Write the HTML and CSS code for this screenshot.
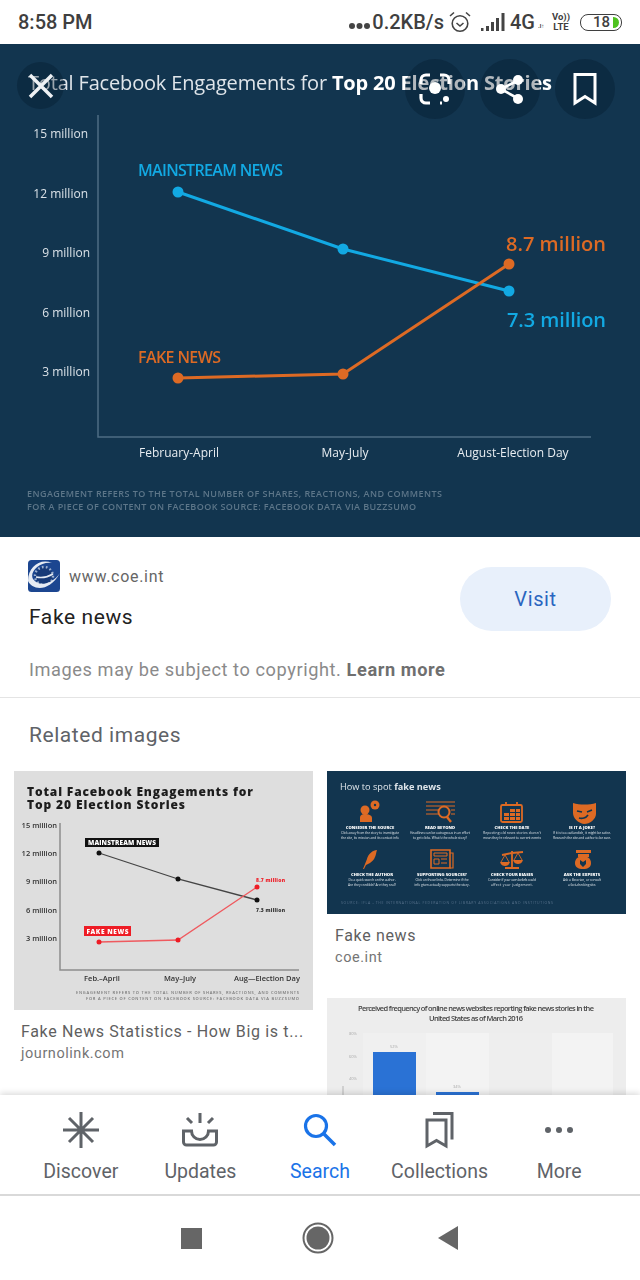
FILE: index.html
```html
<!DOCTYPE html>
<html lang="en">
<head>
<meta charset="utf-8">
<title>Fake news</title>
<link rel="stylesheet" href="styles.css">
</head>
<body>
<div class="phone">
  <header class="status">
    <span class="time">8:58 PM</span>
    <div class="status-right">
      <svg class="dots" width="21" height="8" viewBox="0 0 21 8"><g fill="#444"><circle cx="3" cy="4" r="3"/><circle cx="10.500" cy="4" r="3"/><circle cx="18" cy="4" r="3"/></g></svg>
      <span class="speed">0.2KB/s</span>
      <svg class="alarm" width="22" height="22" viewBox="0 0 22 22"><circle cx="11" cy="12.500" r="7.800" fill="none" stroke="#444" stroke-width="1.600"/><path d="M7.500 12l3.500 3 3.500-3M1 5l4-3.500M21 5l-4-3.500" fill="none" stroke="#444" stroke-width="1.600"/></svg>
      <svg class="signal" width="24" height="18" viewBox="0 0 24 18"><path d="M0 15h2.500v3H0zM5 13h3v5H5zM10 9h3v9h-3zM15 5h3v13h-3zM20.500 0h3v18h-3z" fill="#444"/></svg>
      <span class="net">4G</span>
      <span class="arrows">.l↑</span>
      <span class="volte"><span>Vo))</span><span>LTE</span></span>
      <div class="battery"><span class="batt-num">18</span><i class="batt-fill"></i></div>
    </div>
  </header>

  <section class="hero">
    <svg class="hero-chart" viewBox="0 44 640 493" width="640" height="493">
      <text class="h-title" x="28" y="90" textLength="524">Total Facebook Engagements for <tspan class="h-bold">Top 20 Election Stories</tspan></text>
      <path d="M98 115V437H591" fill="none" stroke="#4d6c84" stroke-width="1.500"/>
      <g class="h-y">
        <text x="88" y="138">15 million</text>
        <text x="88" y="198">12 million</text>
        <text x="90" y="257">9 million</text>
        <text x="90" y="317">6 million</text>
        <text x="90" y="376">3 million</text>
      </g>
      <g class="h-x">
        <text x="179" y="457">February-April</text>
        <text x="345" y="457">May-July</text>
        <text x="513" y="457">August-Election Day</text>
      </g>
      <text class="h-lbl blue" x="138" y="176" textLength="145">MAINSTREAM NEWS</text>
      <text class="h-lbl orange" x="138" y="363" textLength="83">FAKE NEWS</text>
      <path d="M178 192L343 249 509 291" fill="none" stroke="#12a9e3" stroke-width="3"/>
      <path d="M178 378L343 374 509 264" fill="none" stroke="#dd6a24" stroke-width="3"/>
      <g fill="#12a9e3"><circle cx="178" cy="192" r="5.500"/><circle cx="343" cy="249" r="5.500"/><circle cx="509" cy="291" r="5.500"/></g>
      <g fill="#dd6a24"><circle cx="178" cy="378" r="5.500"/><circle cx="343" cy="374" r="5.500"/><circle cx="509" cy="264" r="5.500"/></g>
      <text class="h-val orange" x="506" y="251" textLength="100">8.7 million</text>
      <text class="h-val blue" x="507" y="327" textLength="99">7.3 million</text>
      <g class="h-note">
        <text x="27" y="497" textLength="415">ENGAGEMENT REFERS TO THE TOTAL NUMBER OF SHARES, REACTIONS, AND COMMENTS</text>
        <text x="27" y="510" textLength="389">FOR A PIECE OF CONTENT ON FACEBOOK SOURCE: FACEBOOK DATA VIA BUZZSUMO</text>
      </g>
    </svg>
    <button class="round round-close" aria-label="Close">
      <svg width="30" height="30" viewBox="0 0 30 30"><path d="M4 4l22 22M26 4L4 26" stroke="#eef1f4" stroke-width="3.500" fill="none"/></svg>
    </button>
    <button class="round round-lens" aria-label="Lens">
      <svg width="36" height="36" viewBox="0 0 36 36"><path d="M4 13V9a5 5 0 0 1 5-5h4M23 4h4a5 5 0 0 1 5 5v4M4 23v4a5 5 0 0 0 5 5h4M23 32h2" fill="none" stroke="#fff" stroke-width="3.200"/><circle cx="18" cy="17" r="6" fill="#fff"/><circle cx="29" cy="28" r="3" fill="#fff"/></svg>
    </button>
    <button class="round round-share" aria-label="Share">
      <svg width="36" height="36" viewBox="0 0 36 36"><path d="M27 9L9 18l18 10" fill="none" stroke="#fff" stroke-width="2.600"/><circle cx="26" cy="9" r="5" fill="#fff"/><circle cx="9" cy="18" r="5" fill="#fff"/><circle cx="26" cy="28" r="5" fill="#fff"/></svg>
    </button>
    <button class="round round-save" aria-label="Save">
      <svg width="30" height="36" viewBox="0 0 30 36"><path d="M5 3.500h20V32l-10-6.500L5 32z" fill="none" stroke="#fff" stroke-width="3"/></svg>
    </button>
  </section>

  <main class="content">
    <section class="source">
      <div class="source-text">
        <div class="site">
          <svg class="site-logo" width="32" height="32" viewBox="0 0 32 32"><rect width="32" height="32" rx="3.500" fill="#1c4690"/><circle cx="16" cy="16" r="9" fill="#173a78" stroke="#9db0ce" stroke-width="2.400" stroke-dasharray="1.700 2.300"/><path d="M0 21c4 9 21 12 32-8-8 12-22 14-27 6C1 12 12 1 24 3 12-2 0 7 0 21z" fill="#e6ebf3"/><path d="M8 17c5 1 12 0 17-3" stroke="#e6ebf3" stroke-width="1.600" fill="none"/></svg>
          <span class="site-url">www.coe.int</span>
        </div>
        <div class="source-name">Fake news</div>
      </div>
      <a class="visit">Visit</a>
    </section>
    <p class="copyright">Images may be subject to copyright. <b>Learn more</b></p>
    <h2 class="related">Related images</h2>
    <div class="gallery">
      <div class="col">
        <article class="card">
          <svg class="thumb" viewBox="0 0 299 239" width="299" height="239">
            <rect width="299" height="239" fill="#dedede"/>
            <g class="t-title"><text x="13" y="25" textLength="226">Total Facebook Engagements for</text><text x="13" y="38" textLength="158">Top 20 Election Stories</text></g>
            <path d="M46 52V199H285" fill="none" stroke="#8d8d8d" stroke-width="1.500"/>
            <g class="t-y"><text x="43" y="57">15 million</text><text x="43" y="85">12 million</text><text x="43" y="113">9 million</text><text x="43" y="142">6 million</text><text x="43" y="170">3 million</text></g>
            <rect x="71" y="67" width="74" height="9" fill="#111"/>
            <text class="t-tag" x="108" y="74" textLength="68">MAINSTREAM NEWS</text>
            <rect x="70" y="155" width="47" height="10" fill="#ee1c25"/>
            <text class="t-tag" x="93.500" y="162.500" textLength="42">FAKE NEWS</text>
            <path d="M85 82L164 108 243 129" fill="none" stroke="#444" stroke-width="1.300"/>
            <path d="M85 171L164 169 243 116" fill="none" stroke="#ef5a5f" stroke-width="1.300"/>
            <g fill="#111"><circle cx="85" cy="82" r="2.500"/><circle cx="164" cy="108" r="2.500"/><circle cx="243" cy="129" r="2.500"/></g>
            <g fill="#ee1c25"><circle cx="85" cy="171" r="2.500"/><circle cx="164" cy="169" r="2.500"/><circle cx="243" cy="116" r="2.500"/></g>
            <text class="t-val red" x="242" y="111" textLength="29">8.7 million</text>
            <text class="t-val" x="242" y="141" textLength="29">7.3 million</text>
            <g class="t-x"><text x="88" y="210">Feb.–April</text><text x="166" y="210">May–July</text><text x="253" y="210">Aug—Election Day</text></g>
            <g class="t-note"><text x="285" y="223" textLength="223">ENGAGEMENT REFERS TO THE TOTAL NUMBER OF SHARES, REACTIONS, AND COMMENTS</text><text x="285" y="229" textLength="213">FOR A PIECE OF CONTENT ON FACEBOOK SOURCE: FACEBOOK DATA VIA BUZZSUMO</text></g>
          </svg>
          <div class="cap"><div class="cap-title">Fake News Statistics - How Big is t...</div><div class="cap-site">journolink.com</div></div>
        </article>
      </div>
      <div class="col">
        <article class="card">
          <svg class="thumb" viewBox="0 0 299 143" width="299" height="143">
            <rect width="299" height="143" fill="#12354f"/>
            <text class="s-title" x="13" y="19">How to spot <tspan font-weight="700">fake news</tspan></text>
            <g fill="none" stroke="#dd6a24" stroke-width="2">
              <circle cx="38" cy="39" r="4.500" fill="#dd6a24" stroke="none"/><path d="M33 51v-4c0-3 2-4 5-4s7 1 7 4v4z" fill="#dd6a24" stroke="none"/><circle cx="48" cy="34" r="4.500" fill="#dd6a24" stroke="none"/><circle cx="48" cy="34" r="1.200" fill="#12354f" stroke="none"/>
              <path d="M99 31h29M99 35h29M99 39h13M99 43h13M124 39h4M124 43h4" stroke-width="1.200"/><circle cx="117" cy="41" r="5.500" stroke-width="2"/><path d="M120 46l4 5" stroke-width="2.400"/>
              <rect x="174" y="34" width="21" height="17" rx="1.500" stroke-width="1.800"/><path d="M179 31v4M190 31v4" stroke-width="1.800"/><path d="M177 42h5v3h-5zM177 46h5v3h-5zM183 38h5v3h-5zM189 38h4v3h-4zM183 42h5v3h-5zM189 42h4v3h-4zM183 46h5v3h-5zM189 46h4v3h-4z" fill="#dd6a24" stroke="none"/>
              <path d="M246 32c7 2 16 2 23 0v11c0 5-6 10-12 10-6-1-11-6-11-11z" fill="#dd6a24" stroke="none"/><path d="M250 40l5 1M260 41l5-2M252 47c3 1 7 0 9-3" stroke="#12354f" stroke-width="1.600"/>
              <path d="M36 98l4-10c1-5 6-9 10-9-1 3-1 5-2 7-1 3-3 4-5 6l-4 2-2 4z" fill="#dd6a24" stroke="none"/>
              <path d="M104 79h19v18h-19z" stroke-width="1.600"/><path d="M123 82h3v15h-3" stroke-width="1.200"/><path d="M107 82h13v3h-13zM107 88h5v5h-5z" stroke-width="1"/><path d="M114 88h6M114 92h6" stroke-width="1.200"/>
              <path d="M185 80v16M178 97h14M175 84l10-2 11-1" stroke-width="1.800"/><path d="M173 91h10c-1 3-3 4-5 4s-4-1-5-4zM186 89h10c-1 3-3 4-5 4s-4-1-5-4z" fill="#dd6a24" stroke="none"/><path d="M178 84l-4 7M178 84l4 7M191 82l-4 7M191 82l4 7" stroke-width=".9"/>
              <path d="M249 79h15v3h-15zM251 83h11v3h-11z" fill="#dd6a24" stroke="none"/><path d="M256 85c5 0 8 3 8 7s-3 6-8 6-8-2-8-6 3-7 8-7z" fill="#dd6a24" stroke="none"/><path d="M253 89l3 2 3-2v4l-3 3-3-3z" fill="#12354f" stroke="none"/>
            </g>
            <g class="s-h">
              <text x="43" y="58">CONSIDER THE SOURCE</text><text x="113" y="58">READ BEYOND</text><text x="185" y="58">CHECK THE DATE</text><text x="255" y="58">IS IT A JOKE?</text>
              <text x="45" y="105">CHECK THE AUTHOR</text><text x="115" y="105">SUPPORTING SOURCES?</text><text x="185" y="105">CHECK YOUR BIASES</text><text x="255" y="105">ASK THE EXPERTS</text>
            </g>
            <g class="s-t">
              <text x="43" y="63" textLength="58">Click away from the story to investigate</text><text x="43" y="68" textLength="58">the site, its mission and its contact info</text>
              <text x="113" y="63" textLength="60">Headlines can be outrageous in an effort</text><text x="113" y="68" textLength="54">to get clicks. What's the whole story?</text>
              <text x="185" y="63" textLength="58">Reposting old news stories doesn't</text><text x="185" y="68" textLength="58">mean they're relevant to current events</text>
              <text x="255" y="63" textLength="58">If it is too outlandish, it might be satire.</text><text x="255" y="68" textLength="58">Research the site and author to be sure.</text>
              <text x="45" y="110" textLength="47">Do a quick search on the author.</text><text x="45" y="115" textLength="48">Are they credible? Are they real?</text>
              <text x="115" y="110" textLength="53">Click on those links. Determine if the</text><text x="115" y="115" textLength="55">info given actually supports the story.</text>
              <text x="185" y="110" textLength="48">Consider if your own beliefs could</text><text x="185" y="115" textLength="42">affect your judgement.</text>
              <text x="255" y="110" textLength="38">Ask a librarian, or consult</text><text x="255" y="115" textLength="28">a fact-checking site.</text>
            </g>
            <text class="s-src" x="14" y="133" textLength="212">SOURCE: IFLA - THE INTERNATIONAL FEDERATION OF LIBRARY ASSOCIATIONS AND INSTITUTIONS</text>
          </svg>
          <div class="cap cap-short"><div class="cap-title">Fake news</div><div class="cap-site">coe.int</div></div>
        </article>
        <article class="card">
          <svg class="thumb" viewBox="0 0 299 120" width="299" height="120">
            <rect width="299" height="120" fill="#ededed"/>
            <rect x="36" y="35" width="63" height="85" fill="#f0f0f0"/>
            <rect x="99" y="35" width="63" height="85" fill="#f3f3f3"/>
            <rect x="162" y="35" width="63" height="85" fill="#eeeeee"/>
            <rect x="225" y="35" width="61" height="85" fill="#f3f3f3"/>
            <g class="b-title"><text x="149" y="13" textLength="236">Perceived frequency of online news websites reporting fake news stories in the</text><text x="149" y="23" textLength="94">United States as of March 2016</text></g>
            <g class="b-y"><text x="26" y="37">80%</text><text x="26" y="60">60%</text><text x="26" y="82">40%</text></g>
            <rect x="46" y="54" width="43" height="66" fill="#2a72d5"/>
            <rect x="109" y="94" width="43" height="26" fill="#2a72d5"/>
            <g class="b-y"><text x="67" y="50">52%</text><text x="130" y="90">34%</text></g>
            <path d="M16 88V118" stroke="#b5b5b5" stroke-width="1"/>
          </svg>
        </article>
      </div>
    </div>
  </main>

  <nav class="tabs">
    <a class="tab">
      <svg width="40" height="40" viewBox="0 0 40 40"><path d="M20 2v36M2 20h36M8 8l24 24M32 8L8 32" stroke="#5f6368" stroke-width="3" fill="none"/></svg>
      <span>Discover</span>
    </a>
    <a class="tab">
      <svg width="40" height="40" viewBox="0 0 40 40"><path d="M3.500 21v11a3 3 0 0 0 3 3h27a3 3 0 0 0 3-3V21h-8a8 8 0 0 1-17 0z" fill="none" stroke="#5f6368" stroke-width="3"/><path d="M20 3v10M7 8l5 5M33 8l-5 5" stroke="#5f6368" stroke-width="3" fill="none"/></svg>
      <span>Updates</span>
    </a>
    <a class="tab tab-active">
      <svg width="40" height="40" viewBox="0 0 40 40"><circle cx="16" cy="16" r="10.500" fill="none" stroke="#1a73e8" stroke-width="3.200"/><path d="M23.500 23.500l11.500 11.500" stroke="#1a73e8" stroke-width="3.600" fill="none"/></svg>
      <span>Search</span>
    </a>
    <a class="tab">
      <svg width="40" height="40" viewBox="0 0 40 40"><path d="M7 10h19v26l-9.500-5.500L7 36z" fill="none" stroke="#5f6368" stroke-width="3"/><path d="M13 3.500h19v26" fill="none" stroke="#5f6368" stroke-width="3"/></svg>
      <span>Collections</span>
    </a>
    <a class="tab">
      <svg width="40" height="40" viewBox="0 0 40 40"><g fill="#5f6368"><circle cx="9" cy="20" r="3"/><circle cx="20" cy="20" r="3"/><circle cx="31" cy="20" r="3"/></g></svg>
      <span>More</span>
    </a>
  </nav>

  <footer class="sysnav">
    <i class="sys-square"></i>
    <svg width="32" height="32" viewBox="0 0 32 32"><circle cx="16" cy="16" r="14.500" fill="none" stroke="#666" stroke-width="2"/><circle cx="16" cy="16" r="11.500" fill="#666"/></svg>
    <svg width="22" height="28" viewBox="0 0 22 28"><path d="M21 2v24L1 14z" fill="#666"/></svg>
  </footer>
</div>
</body>
</html>
```
FILE: styles.css
```css
* { box-sizing: border-box; }
html, body { margin: 0; padding: 0; background: #fff; }
body { font-family: Roboto, "Liberation Sans", sans-serif; }
.phone { width: 640px; height: 1280px; display: flex; flex-direction: column; overflow: hidden; position: relative; background: #fff; }

.status { height: 44px; flex: none; display: flex; align-items: center; justify-content: space-between; padding: 0 18px; color: #3f3f3f; }
.time { font-size: 20px; font-weight: 500; }
.status-right { display: flex; align-items: center; }
.dots { margin: 7px 2px 0 0; }
.speed { font-size: 20px; font-weight: 500; margin-right: 5px; }
.alarm { margin-right: 10px; }
.signal { margin-right: 5px; }
.net { font-size: 20px; font-weight: 500; }
.arrows { font-size: 6px; font-weight: 700; margin: 6px 8px 0 3px; width: 6px; overflow: hidden; white-space: nowrap; }
.volte { display: flex; flex-direction: column; font-size: 9.500px; line-height: 10px; font-weight: 700; align-items: center; margin-right: 10px; }
.battery { width: 42px; height: 17px; border: 1.500px solid #3f3f3f; border-radius: 8px; position: relative; display: flex; align-items: center; padding-left: 12px; font-size: 15px; font-weight: 500; overflow: hidden; }
.batt-fill { position: absolute; right: 2px; top: 2px; bottom: 2px; width: 6px; background: #4fc21f; border-radius: 0 6px 6px 0; }

.hero { height: 493px; flex: none; position: relative; background: #12354f; }
.hero-chart { display: block; filter: blur(0.3px); }
.hero-chart text { font-family: "Open Sans", "Liberation Sans", sans-serif; }
.h-title { font-size: 20px; fill: #dfe5ea; }
.h-bold { font-weight: 700; fill: #fff; }
.h-y text { font-size: 12px; fill: #dbe2e8; text-anchor: end; }
.h-x text { font-size: 12px; fill: #e8edf1; text-anchor: middle; }
.h-lbl { font-size: 16px; font-weight: 600; }
.h-val { font-size: 20px; font-weight: 600; }
.blue { fill: #12a9e3; }
.orange { fill: #dd6a24; }
.h-note text { font-size: 9px; font-weight: 600; fill: #5d7689; }

.round { position: absolute; padding: 0; border: 0; border-radius: 50%; background: rgba(0, 20, 35, 0.3); display: flex; align-items: center; justify-content: center; }
.round-close { left: 17px; top: 18px; width: 47px; height: 47px; }
.round-lens { left: 405px; top: 15px; width: 60px; height: 60px; }
.round-share { left: 480px; top: 15px; width: 60px; height: 60px; }
.round-save { left: 555px; top: 15px; width: 60px; height: 60px; }

.content { flex: 1; min-height: 0; overflow: hidden; }
.source { display: flex; justify-content: space-between; padding: 23px 29px 0 28px; height: 110px; }
.site { display: flex; align-items: center; gap: 9px; }
.site-logo { display: block; }
.site-url { font-size: 16px; letter-spacing: 0.7px; color: #666; }
.source-name { font-size: 21px; letter-spacing: 0.6px; color: #222; margin: 13px 0 0 1px; }
.visit { width: 151px; height: 64px; margin-top: 7px; border-radius: 32px; background: #e8f0fb; color: #2a66c0; font-size: 20px; letter-spacing: 0.6px; display: flex; align-items: center; justify-content: center; }
.copyright { margin: 0; height: 51px; padding: 12px 0 0 29px; font-size: 18.200px; letter-spacing: 0.58px; color: #8a8a8a; border-bottom: 1px solid #e4e4e4; line-height: 22px; }
.copyright b { color: #6f6f6f; font-weight: 700; }
.related { margin: 0; padding: 25px 0 0 29px; height: 73px; font-size: 21px; font-weight: 400; letter-spacing: 0.55px; color: #5f6368; line-height: 24px; }
.gallery { display: grid; grid-template-columns: 299px 299px; column-gap: 14px; padding-left: 14px; }
.thumb { display: block; filter: blur(0.45px); }
.cap { padding: 12px 0 0 7px; height: 74px; }
.cap-short { padding: 12px 0 0 8px; height: 84px; }
.cap-title { font-size: 16px; letter-spacing: 0.65px; color: #5f5f5f; line-height: 20px; white-space: nowrap; }
.cap-site { font-size: 14.500px; letter-spacing: 0.55px; color: #757575; line-height: 20px; margin-top: 2px; }

.thumb text { font-family: "Open Sans", "Liberation Sans", sans-serif; }
.t-title text { font-size: 12px; font-weight: 800; fill: #1d1d1d; }
.t-y text { font-size: 7.500px; fill: #333; text-anchor: end; font-weight: 600; }
.t-tag { font-size: 6.500px; font-weight: 800; fill: #fff; text-anchor: middle; }
.t-val { font-size: 5px; font-weight: 800; fill: #333; }
.t-val.red { fill: #ee1c25; }
.t-x text { font-size: 7.500px; fill: #333; text-anchor: middle; font-weight: 600; }
.t-note text { font-size: 4px; font-weight: 600; fill: #777; text-anchor: end; }
.s-title { font-size: 9.200px; fill: #dfe5ea; }
.s-h text { font-size: 4.200px; font-weight: 800; fill: #fff; text-anchor: middle; }
.s-t text { font-size: 3.300px; fill: #d9e0e6; text-anchor: middle; }
.s-src { font-size: 3.500px; fill: #56708a; }
.b-title text { font-size: 7.500px; font-weight: 600; fill: #444; text-anchor: middle; }
.b-y text { font-size: 4px; fill: #aaa; text-anchor: middle; }

.tabs { height: 101px; flex: none; display: flex; justify-content: space-between; padding: 15px 21px 0 21px; background: #fff; border-bottom: 2px solid #d9d9d9; box-shadow: 0 -2px 6px rgba(0, 0, 0, 0.14); position: relative; }
.tab { width: 120px; display: flex; flex-direction: column; align-items: center; gap: 11px; color: #5f6368; font-size: 19.500px; line-height: 22px; }
.tab-active { color: #1a73e8; }
.sysnav { height: 84px; flex: none; display: flex; align-items: center; justify-content: center; position: relative; background: #fff; }
.sys-square { width: 21px; height: 21px; background: #666; display: block; }
.sysnav svg:nth-of-type(1) { margin-left: 100px; }
.sysnav svg:nth-of-type(2) { margin-left: 103px; }
```
